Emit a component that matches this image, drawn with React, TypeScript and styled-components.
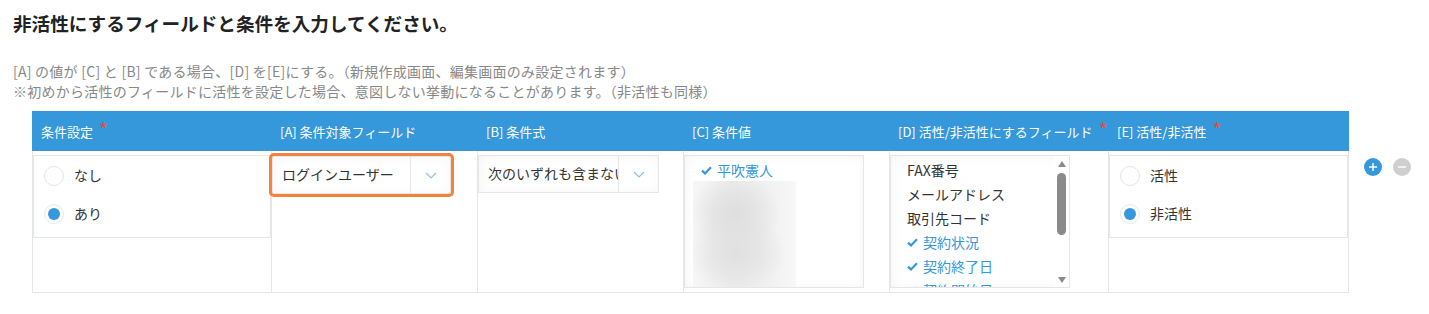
import React from "react";
import styled, { createGlobalStyle } from "styled-components";

const GlobalStyle = createGlobalStyle`
  html, body { margin: 0; padding: 0; background: #fff; }
  body {
    font-family: "Noto Sans CJK JP", "Noto Sans", sans-serif;
    color: #333;
  }
`;

const Page = styled.div`
  padding: 11px 13px 0;
`;

const Title = styled.h2`
  margin: 0;
  font-size: 18.6px;
  line-height: 24px;
  font-weight: bold;
  color: #222;
`;

const Description = styled.div`
  margin-top: 26px;
  font-size: 14px;
  letter-spacing: 0.25px;
  line-height: 20px;
  color: #888;
`;

const TableRow = styled.div`
  display: flex;
  align-items: flex-start;
  margin-top: 10px;
  margin-left: 19px;
`;

const Table = styled.div`
  display: grid;
  grid-template-columns: 239px 206px 206px 206px 219px 241px;
`;

const HeaderCell = styled.div`
  height: 40px;
  background: #3498db;
  color: #fff;
  font-size: 13px;
  display: flex;
  align-items: center;
  padding-left: 9px;
  white-space: nowrap;
`;

const Required = styled.span`
  color: #e74c3c;
  font-size: 19px;
  line-height: 1;
  margin-left: 6px;
  position: relative;
  top: -3px;
`;

const BodyCell = styled.div<{ $last?: boolean }>`
  border-left: 1px solid #e3e7e8;
  border-right: ${(p) => (p.$last ? "1px solid #e3e7e8" : "none")};
  border-bottom: 1px solid #e3e7e8;
  padding-top: 4px;
  box-sizing: border-box;
  height: 142px;
`;

const RadioBox = styled.div`
  border: 1px solid #e3e7e8;
  padding: 1px 0 4px;
  display: flex;
  flex-direction: column;
`;

const RadioItem = styled.label`
  height: 38px;
  display: flex;
  align-items: center;
  padding-left: 10px;
  gap: 10px;
  font-size: 14px;
  color: #333;
`;

const RadioCircle = styled.span<{ $checked?: boolean }>`
  width: 20px;
  height: 20px;
  box-sizing: border-box;
  border-radius: 50%;
  border: 1px solid #e3e7e8;
  background: #fff;
  display: flex;
  align-items: center;
  justify-content: center;
  &::after {
    content: "";
    display: ${(p) => (p.$checked ? "block" : "none")};
    width: 12px;
    height: 12px;
    border-radius: 50%;
    background: #3498db;
  }
`;

const RadioLabel = styled.span`
  position: relative;
  top: -1px;
`;

const Select = styled.div<{ $highlight?: boolean; $width: number }>`
  width: ${(p) => p.$width}px;
  height: 38px;
  box-sizing: border-box;
  border: 1px solid #e3e7e8;
  box-shadow: 1px 1px 12px #f5f5f5 inset;
  background: #fff;
  display: flex;
  align-items: stretch;
  outline: ${(p) => (p.$highlight ? "3px solid #f5813a" : "none")};
  outline-offset: 0px;
  border-radius: ${(p) => (p.$highlight ? "2px" : "0")};
  margin-top: ${(p) => (p.$highlight ? "1px" : "0")};
`;

const SelectText = styled.div`
  flex: 1;
  overflow: hidden;
  white-space: nowrap;
  padding-left: 9px;
  font-size: 14px;
  line-height: 34px;
  color: #333;
`;

const SelectButton = styled.div`
  width: 39px;
  border-left: 1px solid #e3e7e8;
  display: flex;
  align-items: center;
  justify-content: center;
`;

const ListBox = styled.div`
  width: 180px;
  height: 133px;
  box-sizing: border-box;
  border: 1px solid #e3e7e8;
  box-shadow: 1px 1px 12px #f5f5f5 inset;
  background: #fff;
  display: flex;
  overflow: hidden;
`;

const ListItems = styled.div`
  flex: 1;
  padding-top: 2px;
  overflow: hidden;
`;

const ListItem = styled.div<{ $selected?: boolean }>`
  height: 24px;
  display: flex;
  align-items: center;
  padding-left: 16px;
  font-size: 14px;
  white-space: nowrap;
  color: ${(p) => (p.$selected ? "#3498db" : "#333")};
`;

const CheckWrap = styled.span`
  display: inline-flex;
  width: 16px;
  flex: none;
`;

const Blurred = styled.div`
  margin-left: 8px;
  width: 103px;
  height: 107px;
  margin-top: -1px;
  background:
    radial-gradient(ellipse 45px 40px at 42px 32px, #dedede 0%, rgba(224,224,224,0.7) 50%, rgba(235,235,235,0) 100%),
    radial-gradient(ellipse 48px 42px at 44px 72px, #e0e0e0 0%, rgba(226,226,226,0.7) 50%, rgba(235,235,235,0) 100%),
    linear-gradient(90deg, #f6f6f6 0%, #eeeeee 40%, #f2f2f2 80%, #f8f8f8 100%);
`;

const ScrollTrack = styled.div`
  width: 15px;
  display: flex;
  flex-direction: column;
  align-items: center;
  padding: 5px 0 4px;
  background: #fff;
  box-sizing: border-box;
`;

const ArrowUp = styled.span`
  width: 0;
  height: 0;
  border-left: 4.5px solid transparent;
  border-right: 4.5px solid transparent;
  border-bottom: 6px solid #8a8a8a;
`;

const ArrowDown = styled.span`
  width: 0;
  height: 0;
  border-left: 4.5px solid transparent;
  border-right: 4.5px solid transparent;
  border-top: 6px solid #8a8a8a;
`;

const Thumb = styled.span`
  width: 9px;
  height: 62px;
  margin-top: 6px;
  border-radius: 5px;
  background: #8a8a8a;
`;

const ScrollSpacer = styled.span`
  flex: 1;
`;

const Actions = styled.div`
  display: flex;
  gap: 11px;
  margin-left: 15px;
  margin-top: 47px;
`;

const RoundButton = styled.span<{ $variant: "add" | "remove" }>`
  width: 18px;
  height: 18px;
  border-radius: 50%;
  background: ${(p) => (p.$variant === "add" ? "#3498db" : "#cfcfcf")};
  display: flex;
  align-items: center;
  justify-content: center;
`;

const Chevron = () => (
  <svg width="12" height="7" viewBox="0 0 12 7" fill="none">
    <path d="M1 1 L6 6 L11 1" stroke="#8ec0ea" strokeWidth="1.2" />
  </svg>
);

const Check = () => (
  <CheckWrap>
    <svg width="11" height="9" viewBox="0 0 11 9" fill="none">
      <path d="M1 4.6 L4 7.4 L10 1.2" stroke="#3498db" strokeWidth="2.2" />
    </svg>
  </CheckWrap>
);

const Radio = ({ label, checked }: { label: string; checked?: boolean }) => (
  <RadioItem>
    <RadioCircle $checked={checked} />
    <RadioLabel>{label}</RadioLabel>
  </RadioItem>
);

const headers: { label: string; required?: boolean }[] = [
  { label: "条件設定", required: true },
  { label: "[A] 条件対象フィールド" },
  { label: "[B] 条件式" },
  { label: "[C] 条件値" },
  { label: "[D] 活性/非活性にするフィールド", required: true },
  { label: "[E] 活性/非活性", required: true },
];

const dItems: { label: string; selected?: boolean }[] = [
  { label: "FAX番号" },
  { label: "メールアドレス" },
  { label: "取引先コード" },
  { label: "契約状況", selected: true },
  { label: "契約終了日", selected: true },
  { label: "契約開始日", selected: true },
];

export default function App() {
  return (
    <>
      <GlobalStyle />
      <Page>
        <Title>非活性にするフィールドと条件を入力してください。</Title>
        <Description>
          <div>[A] の値が [C] と [B] である場合、[D] を[E]にする。（新規作成画面、編集画面のみ設定されます）</div>
          <div>※初めから活性のフィールドに活性を設定した場合、意図しない挙動になることがあります。（非活性も同様）</div>
        </Description>
        <TableRow>
          <Table>
            {headers.map((h) => (
              <HeaderCell key={h.label}>
                {h.label}
                {h.required && <Required>*</Required>}
              </HeaderCell>
            ))}
            <BodyCell>
              <RadioBox>
                <Radio label="なし" />
                <Radio label="あり" checked />
              </RadioBox>
            </BodyCell>
            <BodyCell>
              <Select $highlight $width={179}>
                <SelectText>ログインユーザー</SelectText>
                <SelectButton>
                  <Chevron />
                </SelectButton>
              </Select>
            </BodyCell>
            <BodyCell>
              <Select $width={181}>
                <SelectText>次のいずれも含まない</SelectText>
                <SelectButton>
                  <Chevron />
                </SelectButton>
              </Select>
            </BodyCell>
            <BodyCell>
              <ListBox>
                <ListItems>
                  <ListItem $selected>
                    <Check />
                    平吹憲人
                  </ListItem>
                  <Blurred />
                </ListItems>
              </ListBox>
            </BodyCell>
            <BodyCell>
              <ListBox>
                <ListItems>
                  {dItems.map((it) => (
                    <ListItem key={it.label} $selected={it.selected}>
                      {it.selected && <Check />}
                      {it.label}
                    </ListItem>
                  ))}
                </ListItems>
                <ScrollTrack>
                  <ArrowUp />
                  <Thumb />
                  <ScrollSpacer />
                  <ArrowDown />
                </ScrollTrack>
              </ListBox>
            </BodyCell>
            <BodyCell $last>
              <RadioBox>
                <Radio label="活性" />
                <Radio label="非活性" checked />
              </RadioBox>
            </BodyCell>
          </Table>
          <Actions>
            <RoundButton $variant="add">
              <svg width="10" height="10" viewBox="0 0 10 10">
                <path d="M5 1 V9 M1 5 H9" stroke="#fff" strokeWidth="1.4" />
              </svg>
            </RoundButton>
            <RoundButton $variant="remove">
              <svg width="10" height="10" viewBox="0 0 10 10">
                <path d="M1 5 H9" stroke="#fff" strokeWidth="1.4" />
              </svg>
            </RoundButton>
          </Actions>
        </TableRow>
      </Page>
    </>
  );
}
